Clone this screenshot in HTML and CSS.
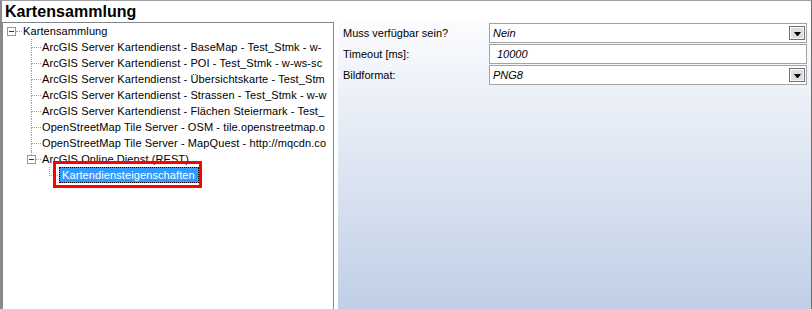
FILE: index.html
```html
<!DOCTYPE html>
<html>
<head>
<meta charset="utf-8">
<link rel="stylesheet" href="styles.css">
</head>
<body>
<div class="window">
  <div class="title">Kartensammlung</div>
  <div class="main">
    <div class="tree">
      <div class="row">
        <span class="sp4"></span>
        <span class="expander"></span>
        <span class="stub6"></span>
        <span class="label">Kartensammlung</span>
      </div>
      <div class="row"><span class="sp28"></span><span class="conn"></span><span class="label">ArcGIS Server Kartendienst - BaseMap - Test_Stmk - w-</span></div>
      <div class="row"><span class="sp28"></span><span class="conn"></span><span class="label">ArcGIS Server Kartendienst - POI - Test_Stmk - w-ws-sc</span></div>
      <div class="row"><span class="sp28"></span><span class="conn"></span><span class="label">ArcGIS Server Kartendienst - Übersichtskarte - Test_Stm</span></div>
      <div class="row"><span class="sp28"></span><span class="conn"></span><span class="label">ArcGIS Server Kartendienst - Strassen - Test_Stmk - w-w</span></div>
      <div class="row"><span class="sp28"></span><span class="conn"></span><span class="label">ArcGIS Server Kartendienst - Flächen Steiermark - Test_</span></div>
      <div class="row"><span class="sp28"></span><span class="conn"></span><span class="label">OpenStreetMap Tile Server - OSM - tile.openstreetmap.o</span></div>
      <div class="row"><span class="sp28"></span><span class="conn"></span><span class="label">OpenStreetMap Tile Server - MapQuest - http://mqcdn.co</span></div>
      <div class="row">
        <span class="sp24"></span>
        <span class="expcell"><span class="vtop"></span><span class="expander"></span></span>
        <span class="stub5"></span>
        <span class="label">ArcGIS Online Dienst (REST)</span>
      </div>
      <div class="row"><span class="sp46"></span><span class="conn last"></span><span class="annot"><span class="label sel">Kartendiensteigenschaften</span></span></div>
    </div>
    <div class="props">
      <div class="prop">
        <span class="pname">Muss verfügbar sein?</span>
        <div class="pval"><span class="vtext">Nein</span><span class="ddbtn"><span class="arrow"></span></span></div>
      </div>
      <div class="prop">
        <span class="pname">Timeout [ms]:</span>
        <div class="pval"><span class="vtext indent">10000</span></div>
      </div>
      <div class="prop">
        <span class="pname">Bildformat:</span>
        <div class="pval"><span class="vtext">PNG8</span><span class="ddbtn"><span class="arrow"></span></span></div>
      </div>
    </div>
  </div>
</div>
</body>
</html>
```
FILE: styles.css
```css
html, body {
  margin: 0;
  padding: 0;
  background: #ffffff;
}
body {
  font-family: "Liberation Sans", Arial, sans-serif;
  font-size: 11px;
  color: #000;
}
.window {
  width: 812px;
  height: 309px;
  box-sizing: border-box;
  border-top: 1px solid #a0a0a0;
  border-left: 2px solid #8a8a8a;
  border-right: 1px solid #6b6b6b;
  background: #fff;
  display: flex;
  flex-direction: column;
  overflow: hidden;
}
.title {
  height: 21px;
  line-height: 21px;
  font-size: 16px;
  font-weight: bold;
  padding-left: 3px;
  letter-spacing: 0.05px;
  white-space: nowrap;
}
.main {
  flex: 1;
  display: flex;
  min-height: 0;
}
.tree {
  width: 332px;
  box-sizing: border-box;
  border-top: 1px solid #828790;
  border-left: 1px solid #828790;
  border-right: 1px solid #828790;
  margin-right: 4px;
  overflow: hidden;
  background: #fff;
}
.row {
  height: 16px;
  display: flex;
  align-items: center;
  white-space: nowrap;
}
.label {
  line-height: 16px;
  letter-spacing: 0.1px;
  flex: none;
}
.sp4 { width: 4px; flex: none; }
.sp24 { width: 24px; flex: none; }
.sp28 { width: 28px; flex: none; }
.sp46 { width: 46px; flex: none; }
.expander {
  width: 9px;
  height: 9px;
  box-sizing: border-box;
  border: 1px solid #8e99a6;
  background: #fff;
  display: flex;
  align-items: center;
  justify-content: center;
  flex: none;
}
.expander::after {
  content: "";
  width: 5px;
  height: 1px;
  background: #1e3a5a;
}
.stub6, .stub5 {
  height: 0;
  border-top: 1px dotted #a0a0a0;
  margin-right: 1px;
  flex: none;
}
.stub6 { width: 6px; }
.stub5 { width: 5px; }
.expcell {
  width: 9px;
  height: 16px;
  display: flex;
  flex-direction: column;
  align-items: center;
  flex: none;
}
.vtop {
  width: 0;
  height: 4px;
  border-left: 1px dotted #a0a0a0;
}
.conn {
  width: 10px;
  height: 16px;
  display: grid;
  grid-template-rows: 9px 7px;
  flex: none;
  margin-right: 1px;
}
.conn::before {
  content: "";
  border-left: 1px dotted #a0a0a0;
  border-bottom: 1px dotted #a0a0a0;
}
.conn::after {
  content: "";
  border-left: 1px dotted #a0a0a0;
}
.conn.last {
  width: 9px;
}
.conn.last::after {
  border-left: none;
}
.annot {
  position: relative;
  display: flex;
  flex: none;
}
.annot::after {
  content: "";
  position: absolute;
  left: -6px;
  top: -6px;
  right: -3px;
  bottom: -5px;
  border: 3px solid #ff0000;
}
.label.sel {
  background: #3399ff;
  color: #fff;
  height: 16px;
  box-sizing: border-box;
  border: 1px dotted #000;
  line-height: 14px;
  letter-spacing: 0.1px;
  padding: 0 3px 0 2px;
}
.props {
  flex: 1;
  background: linear-gradient(to bottom, #fbfcfe 0%, #c0cfe6 100%);
  padding-top: 1px;
  display: flex;
  flex-direction: column;
  gap: 1px;
}
.prop {
  height: 20px;
  display: flex;
  align-items: center;
}
.pname {
  width: 146px;
  padding-left: 5px;
  flex: none;
  white-space: nowrap;
}
.pval {
  flex: 1;
  height: 20px;
  box-sizing: border-box;
  margin-right: 4px;
  border: 1px solid #a3a3a3;
  background: #fff;
  display: flex;
  align-items: center;
  font-style: italic;
}
.vtext {
  flex: 1;
  padding-left: 3px;
}
.vtext.indent {
  padding-left: 7px;
}
.ddbtn {
  width: 16px;
  height: 14px;
  box-sizing: border-box;
  border: 1px solid #707070;
  background: #dedede;
  box-shadow: inset 1px 1px 0 #ffffff, inset -1px -1px 0 #f4f4f4;
  margin-right: 1px;
  display: flex;
  align-items: center;
  justify-content: center;
  flex: none;
}
.arrow {
  width: 1px;
  height: 0;
  border-left: 3px solid transparent;
  border-right: 3px solid transparent;
  border-top: 4px solid #000;
  margin-top: 2px;
}
```
